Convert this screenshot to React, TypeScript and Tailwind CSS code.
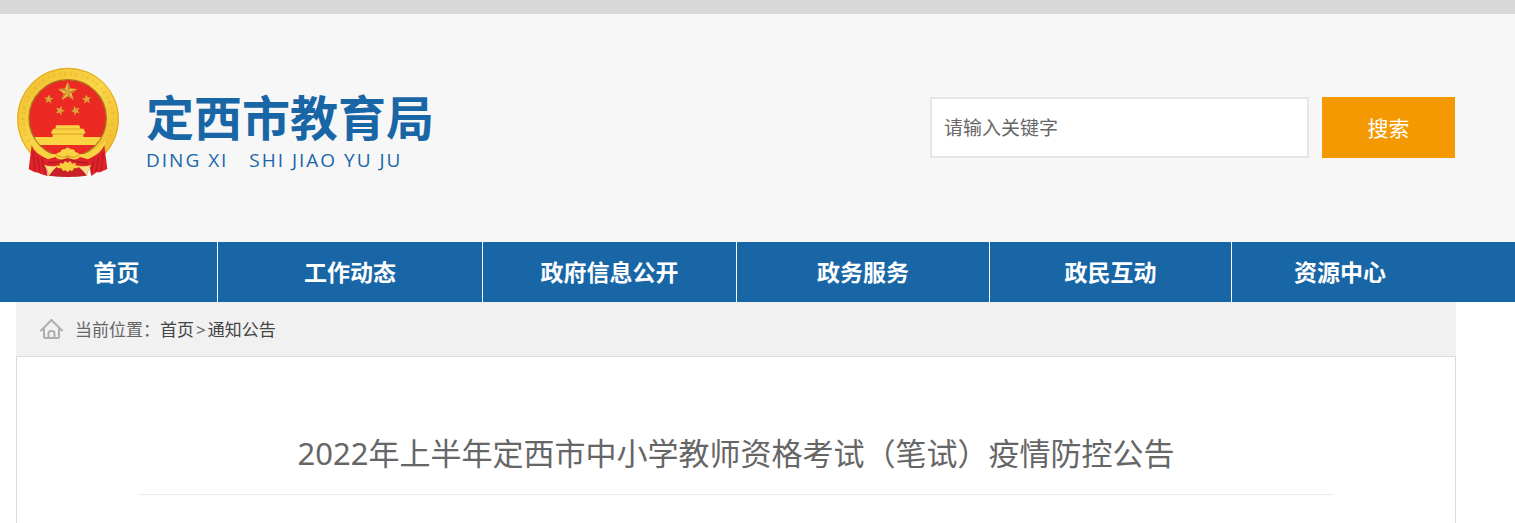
const navItems = [
  "首页",
  "工作动态",
  "政府信息公开",
  "政务服务",
  "政民互动",
  "资源中心",
];

const STAR =
  "M0 -10 L2.6 -3.4 L9.5 -3.1 L4 1.4 L5.9 8.1 L0 4.2 L-5.9 8.1 L-4 1.4 L-9.5 -3.1 L-2.6 -3.4 Z";
const STAR_SHADE =
  "M0 -10 L2.6 -3.4 L0 0 Z M9.5 -3.1 L4 1.4 L0 0 Z M5.9 8.1 L0 4.2 L0 0 Z M-5.9 8.1 L-4 1.4 L0 0 Z M-9.5 -3.1 L-2.6 -3.4 L0 0 Z";

const stars = [
  { x: 205, y: 111, scale: 3, rotate: 0 },
  { x: 148, y: 133, scale: 1.45, rotate: 5 },
  { x: 262, y: 133, scale: 1.45, rotate: -5 },
  { x: 182, y: 167, scale: 1.45, rotate: 20 },
  { x: 229, y: 167, scale: 1.45, rotate: -20 },
];

const Emblem = () => (
  <svg
    viewBox="50 36 312 333"
    className="h-[111px] w-[104px] shrink-0"
    role="img"
    aria-label="国徽"
  >
    <defs>
      <linearGradient id="gold" x1="0" y1="0" x2="1" y2="1">
        <stop offset="0" stopColor="#efbd2e" />
        <stop offset="0.5" stopColor="#fad647" />
        <stop offset="1" stopColor="#ecb52a" />
      </linearGradient>
      <clipPath id="disc">
        <ellipse cx="205" cy="190" rx="115" ry="115" />
      </clipPath>
    </defs>
    <ellipse cx="206" cy="192" rx="153" ry="154" fill="url(#gold)" />
    <ellipse
      cx="206"
      cy="192"
      rx="151"
      ry="152"
      fill="none"
      stroke="#e0a829"
      strokeWidth="3"
    />
    <ellipse
      cx="206"
      cy="192"
      rx="135"
      ry="136"
      fill="none"
      stroke="#d9a024"
      strokeWidth="10"
      strokeDasharray="4 9 7 14"
      opacity="0.3"
    />
    <ellipse
      cx="205"
      cy="190"
      rx="116"
      ry="116"
      fill="#ec2a24"
      stroke="#a9741f"
      strokeWidth="4"
    />
    {stars.map(({ x, y, scale, rotate }) => (
      <g
        key={`${x}-${y}`}
        transform={`translate(${x} ${y}) rotate(${rotate}) scale(${scale})`}
      >
        <path d={STAR} fill="#eebf45" />
        <path d={STAR_SHADE} fill="#b27a22" opacity="0.75" />
      </g>
    ))}
    {/* gate tower */}
    <g clipPath="url(#disc)">
      <path
        d="M170 211 H240 L243 221 H252 L259 234 L252 237 V246 H320 V270 H90 V246 H160 V237 L154 234 L162 221 H168 Z"
        fill="#fad443"
      />
      <path
        d="M166 222 H246 M158 237 H254"
        stroke="#dda12b"
        strokeWidth="3"
      />
    </g>
    {/* wheat meeting at the gear */}
    <path
      d="M92 255 Q122 286 152 297 L170 298 Q176 291 183 292 Q186 280 196 283 Q205 272 214 283 Q226 280 228 292 Q236 291 240 298 L262 297 Q292 286 319 255 L312 290 Q298 309 262 317 L240 312 L224 320 L205 304 L187 320 L171 312 L148 317 Q112 309 99 290 Z"
      fill="#fad345"
    />
    <path
      d="M170 300 Q190 312 205 302 Q220 312 240 300"
      fill="none"
      stroke="#e3a82c"
      strokeWidth="4"
    />
    {/* ribbons */}
    <path
      d="M138 330 L190 318 H222 L272 330 L262 362 Q205 370 148 362 Z"
      fill="#c9202a"
    />
    <path
      d="M97 271 Q104 295 146 313 L168 306 Q180 320 205 309 Q230 320 242 306 L266 313 Q306 295 315 271 L324 342 L312 347 L303 352 L292 352 L276 363 L270 334 Q238 338 205 320 Q172 338 140 334 L145 363 L126 358 L116 353 L103 350 L88 342 Z"
      fill="#de222a"
    />
    <path
      d="M101 292 L107 346 M114 304 L122 350 M128 312 L138 358 M311 292 L306 346 M298 304 L290 350 M284 312 L276 356"
      fill="none"
      stroke="#b0161f"
      strokeWidth="4"
      opacity="0.7"
    />
    <path
      d="M146 322 Q176 326 200 312 M264 322 Q236 326 210 312"
      fill="none"
      stroke="#b3161f"
      strokeWidth="4"
    />
    <path
      d="M134 330 Q154 336 176 332 Q160 344 148 363 Q146 344 134 330 Z M276 330 Q256 336 234 332 Q250 344 264 363 Q264 344 276 330 Z"
      fill="#fadf80"
    />
    <path
      d="M165 333 L182 331 L181 323 L192 326 L197 318 L205 323 L213 318 L218 326 L229 323 L228 331 L246 333 L232 340 L224 340 L219 348 L211 346 L205 352 L199 346 L191 348 L186 340 L178 340 Z"
      fill="#f8cc3c"
    />
  </svg>
);

const HomeIcon = () => (
  <svg
    viewBox="0 0 23 22"
    className="h-[22px] w-[23px] shrink-0"
    fill="none"
    stroke="#aeaeae"
    strokeWidth="2"
    strokeLinejoin="round"
    strokeLinecap="round"
    aria-hidden="true"
  >
    <path d="M1 11.5 L11.5 1 L22 11.5" />
    <path d="M4 10 V18 Q4 19 5 19 H18 Q19 19 19 18 V10" />
    <path d="M8.5 18.5 V14 Q8.5 12 11.5 12 Q14.5 12 14.5 14 V18.5" />
  </svg>
);

export default function App() {
  return (
    <div className="flex min-h-screen flex-col bg-white font-['Noto_Sans','Noto_Sans_CJK_SC',sans-serif]">
      <div className="h-[14px] bg-[#d8d8d8]" />

      <header className="flex h-[228px] items-center justify-between bg-[#f7f7f7] pr-[60px] pb-0.5 pl-4">
        <a
          href="#"
          className="flex items-center gap-[26px] pb-[10px] text-[#1966a7]"
        >
          <Emblem />
          <div>
            <div className="pt-4 text-5xl leading-[60px] font-bold">
              定西市教育局
            </div>
            <div className="font-['Open_Sans',sans-serif] text-[19px] leading-6 tracking-[2px] whitespace-pre">
              DING XI{"   "}SHI JIAO YU JU
            </div>
          </div>
        </a>
        <form
          className="flex gap-[13px]"
          onSubmit={(e) => e.preventDefault()}
        >
          <input
            type="text"
            aria-label="请输入关键字"
            placeholder="请输入关键字"
            className="h-[61px] w-[379px] border-2 border-[#e6e6e6] bg-white px-3 pt-0.5 text-[19px] text-[#666] outline-none placeholder:text-[#666]"
          />
          <button
            type="submit"
            className="h-[61px] w-[133px] bg-[#f59902] pt-1 text-[21px] text-white"
          >
            搜索
          </button>
        </form>
      </header>

      <nav className="bg-[#1966a7] pr-[59px] pl-4">
        <ul className="grid grid-cols-[202fr_265fr_254fr_253fr_242fr_224fr]">
          {navItems.map((item) => (
            <li
              key={item}
              className="border-r border-white last:border-r-0 last:pr-2"
            >
              <a
                href="#"
                className="block text-center text-[23px] leading-[60px] font-bold text-white"
              >
                {item}
              </a>
            </li>
          ))}
        </ul>
      </nav>

      <main className="mr-[59px] ml-4 flex flex-1 flex-col">
        <div className="flex h-[54px] items-center gap-3 bg-[#f1f1f1] pt-0.5 pl-6 text-[17px] text-[#666]">
          <HomeIcon />
          <div>
            当前位置：
            <a href="#" className="text-[#444]">
              首页
            </a>
            <span className="px-0.5">&gt;</span>
            <a href="#" className="text-[#444]">
              通知公告
            </a>
          </div>
        </div>
        <article className="flex-1 border border-b-0 border-[#dcdcdc] px-[121px] pt-[72px]">
          <h1 className="border-b border-[#ececec] pb-[17px] text-center text-[31px] leading-[48px] text-[#666]">
            2022年上半年定西市中小学教师资格考试（笔试）疫情防控公告
          </h1>
        </article>
      </main>
    </div>
  );
}
